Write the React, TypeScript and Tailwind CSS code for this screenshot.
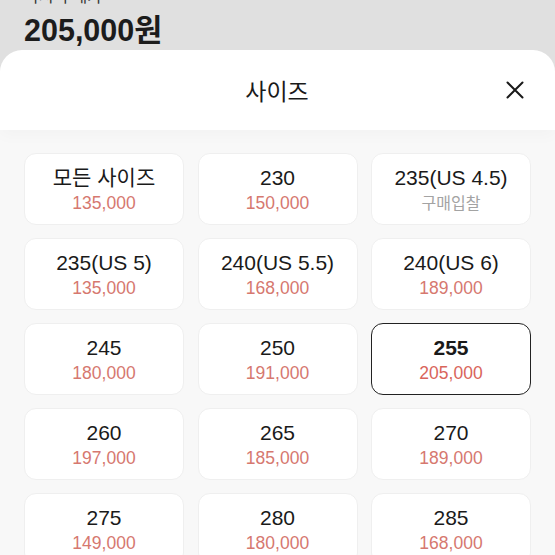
import React from 'react';

type Size = { label: string; price: string | null };

const sizes: Size[] = [
  { label: '모든 사이즈', price: '135,000' },
  { label: '230', price: '150,000' },
  { label: '235(US 4.5)', price: null },
  { label: '235(US 5)', price: '135,000' },
  { label: '240(US 5.5)', price: '168,000' },
  { label: '240(US 6)', price: '189,000' },
  { label: '245', price: '180,000' },
  { label: '250', price: '191,000' },
  { label: '255', price: '205,000' },
  { label: '260', price: '197,000' },
  { label: '265', price: '185,000' },
  { label: '270', price: '189,000' },
  { label: '275', price: '149,000' },
  { label: '280', price: '180,000' },
  { label: '285', price: '168,000' },
];

const SELECTED = '255';

function SizeCard({ size }: { size: Size }) {
  const active = size.label === SELECTED;
  return (
    <button
      className={
        active
          ? 'h-[72px] rounded-[12px] bg-white border-[1.5px] border-[#222] flex flex-col items-center justify-center pt-[2px]'
          : 'h-[72px] rounded-[12px] bg-white border border-[#efefef] flex flex-col items-center justify-center pt-[2px]'
      }
    >
      <span
        className={
          active
            ? 'text-[21px] leading-[27px] font-bold text-[#1a1a1a]'
            : 'text-[21px] leading-[27px] text-[#1a1a1a]'
        }
      >
        {size.label}
      </span>
      {size.price ? (
        <span
          className={
            active
              ? 'text-[17.5px] leading-[25px] font-medium text-[#d9655b]'
              : 'text-[17.5px] leading-[25px] text-[#d6786f]'
          }
        >
          {size.price}
        </span>
      ) : (
        <span className="text-[16px] leading-[25px] text-[#a3a3a3]">구매입찰</span>
      )}
    </button>
  );
}

export default function App() {
  return (
    <div
      className="h-[555px] w-[555px] overflow-hidden bg-[#e0e0e0] flex flex-col"
      style={{ fontFamily: '"Liberation Sans", "Noto Sans CJK KR", sans-serif' }}
    >
      <div className="h-[50px] px-6 shrink-0">
        <p className="-mt-[13px] text-[16px] leading-[20px] text-[#333]">즉시 구매가</p>
        <p className="mt-[5px] text-[30.5px] leading-[36px] font-bold text-[#1c1c1c]">205,000원</p>
      </div>

      <div className="flex-1 bg-white rounded-t-[22px] flex flex-col overflow-hidden">
        <div className="h-[80px] shrink-0 flex items-center justify-between pl-[30px] pr-[31px] relative z-10 shadow-[0_6px_14px_rgba(0,0,0,0.025)]">
          <div className="w-[18px]" />
          <h2 className="text-[23px] text-[#1a1a1a]" style={{ fontFamily: '"Noto Sans CJK KR", sans-serif' }}>
            사이즈
          </h2>
          <svg width="18" height="18" viewBox="0 0 18 18" fill="none" stroke="#1a1a1a" strokeWidth="2" strokeLinecap="round">
            <path d="M1.5 1.5L16.5 16.5M16.5 1.5L1.5 16.5" />
          </svg>
        </div>

        <div className="flex-1 bg-[#f8f8f8] px-6 pt-[23px]">
          <div className="grid grid-cols-3 gap-x-[13.5px] gap-y-[13px]">
            {sizes.map((s) => (
              <SizeCard key={s.label} size={s} />
            ))}
          </div>
        </div>
      </div>
    </div>
  );
}
